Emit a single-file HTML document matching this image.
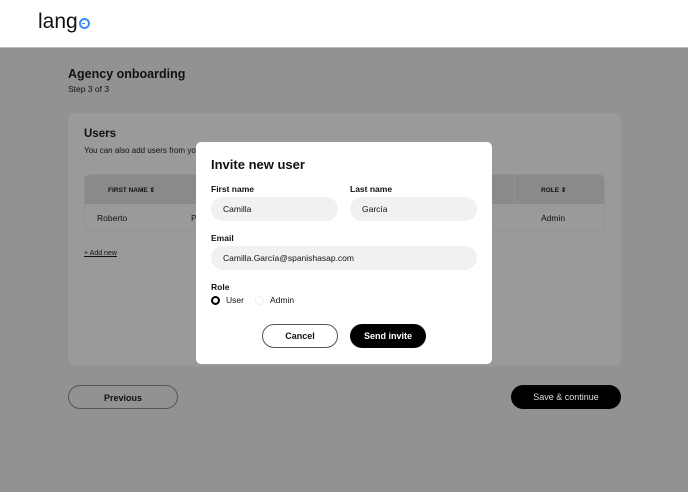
<!DOCTYPE html>
<html><head><style>
*{margin:0;padding:0;box-sizing:border-box}
body{width:688px;height:492px;overflow:hidden;font-family:"Liberation Sans",sans-serif;background:#929292;position:relative;color:#111}
.hdr{position:absolute;left:0;top:0;width:688px;height:48px;background:#fff;border-bottom:1px solid #bbb}
.logo{position:absolute;left:38px;top:10px;font-size:21px;color:#111}
.logo .o{display:inline-block;width:11px;height:11px;border:2.5px solid #3d8ef0;border-radius:50%;position:relative;top:1px;margin-left:1px}
.logo .o:after{content:"";position:absolute;left:1.5px;top:2.5px;width:3px;height:1px;background:#3d8ef0}
.a{position:absolute}
.card{left:68px;top:113px;width:553px;height:253px;background:#9a9a9a;border-radius:7px}
.tbl{left:84px;top:174px;width:521px;height:57px;border-radius:6px;background:#9a9a9a;border:1px solid #939393;overflow:hidden}
.th{position:absolute;left:0;top:0;width:521px;height:29px;background:#8a8a8a}
.btn{position:absolute;border-radius:14px;font-size:9px;font-weight:bold;text-align:center;line-height:24px}
.modal{left:196px;top:142px;width:296px;height:222px;background:#fff;border-radius:5px}
.lbl{position:absolute;font-size:8.5px;font-weight:bold}
.inp{position:absolute;height:24px;background:#f1f1f1;border-radius:12px;font-size:8.5px;line-height:24px;padding-left:12px}
</style></head><body>
<div class="hdr"><div class="logo">lang<span class="o"></span></div></div>
<div class="a" style="left:68px;top:67px;font-size:12.5px;font-weight:bold">Agency onboarding</div>
<div class="a" style="left:68px;top:84px;font-size:8.5px">Step 3 of 3</div>
<div class="a card"></div>
<div class="a" style="left:84px;top:128px;font-size:11.5px;font-weight:bold">Users</div>
<div class="a" style="left:84px;top:146px;font-size:8px">You can also add users from your</div>
<div class="a tbl"><div class="th"></div>
<div class="a" style="left:23px;top:11px;font-size:6.5px;font-weight:bold">FIRST NAME ⇕</div>
<div class="a" style="left:143px;top:0;width:1px;height:29px;background:#939393"></div>
<div class="a" style="left:12px;top:38px;font-size:8.5px">Roberto</div>
<div class="a" style="left:106px;top:38px;font-size:8.5px">P</div>
<div class="a" style="left:429px;top:0;width:1px;height:29px;background:#939393"></div>
<div class="a" style="left:456px;top:11px;font-size:6.5px;font-weight:bold">ROLE ⇕</div>
<div class="a" style="left:456px;top:38px;font-size:8.5px">Admin</div>
</div>
<div class="a" style="left:84px;top:250px;font-size:7px;text-decoration:underline">+ Add new</div>
<div class="btn" style="left:68px;top:385px;width:110px;height:24px;border:1px solid #555">Previous</div>
<div class="btn" style="left:511px;top:385px;width:110px;height:24px;background:#000;color:#ddd;font-weight:normal">Save &amp; continue</div>
<div class="a modal">
<div class="a" style="left:15px;top:15px;font-size:13px;font-weight:bold">Invite new user</div>
<div class="lbl" style="left:15px;top:42px">First name</div>
<div class="lbl" style="left:154px;top:42px">Last name</div>
<div class="inp" style="left:15px;top:55px;width:127px">Camilla</div>
<div class="inp" style="left:154px;top:55px;width:127px">García</div>
<div class="lbl" style="left:15px;top:91px">Email</div>
<div class="inp" style="left:15px;top:104px;width:266px">Camilla.García@spanishasap.com</div>
<div class="lbl" style="left:15px;top:140px">Role</div>
<div class="a" style="left:15px;top:154px;width:9px;height:9px;border-radius:50%;border:2.5px solid #000"></div>
<div class="a" style="left:30px;top:153px;font-size:8.5px">User</div>
<div class="a" style="left:59px;top:154px;width:9px;height:9px;border-radius:50%;border:1px solid #eee"></div>
<div class="a" style="left:74px;top:153px;font-size:8.5px">Admin</div>
<div class="btn" style="left:66px;top:182px;width:76px;height:24px;border:1px solid #555;border-radius:12px;line-height:22px">Cancel</div>
<div class="btn" style="left:154px;top:182px;width:76px;height:24px;background:#000;color:#fff;border-radius:12px">Send invite</div>
</div>
</body></html>
